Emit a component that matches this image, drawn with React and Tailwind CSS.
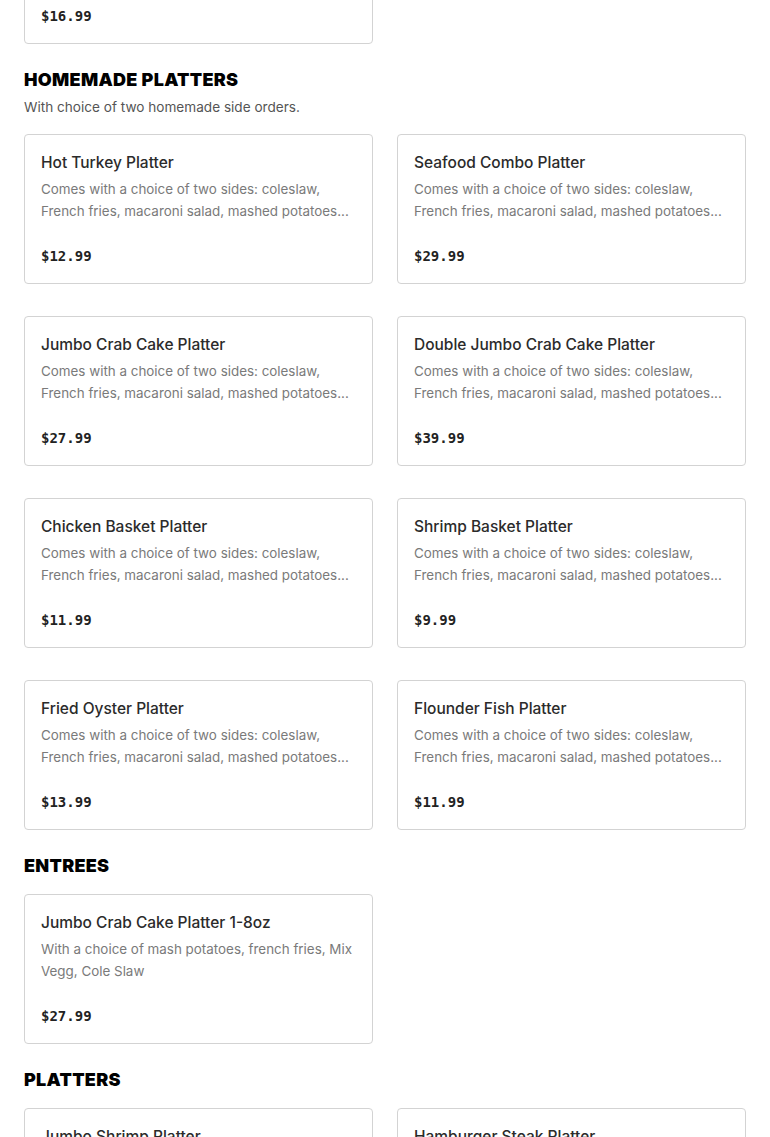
import React from 'react';

const SIDES = 'Comes with a choice of two sides: coleslaw, French fries, macaroni salad, mashed potatoes...';

const sections = [
  {
    title: 'HOMEMADE PLATTERS',
    subtitle: 'With choice of two homemade side orders.',
    items: [
      { name: 'Hot Turkey Platter', desc: SIDES, price: '$12.99' },
      { name: 'Seafood Combo Platter', desc: SIDES, price: '$29.99' },
      { name: 'Jumbo Crab Cake Platter', desc: SIDES, price: '$27.99' },
      { name: 'Double Jumbo Crab Cake Platter', desc: SIDES, price: '$39.99' },
      { name: 'Chicken Basket Platter', desc: SIDES, price: '$11.99' },
      { name: 'Shrimp Basket Platter', desc: SIDES, price: '$9.99' },
      { name: 'Fried Oyster Platter', desc: SIDES, price: '$13.99' },
      { name: 'Flounder Fish Platter', desc: SIDES, price: '$11.99' },
    ],
  },
  {
    title: 'ENTREES',
    items: [
      {
        name: 'Jumbo Crab Cake Platter 1-8oz',
        desc: 'With a choice of mash potatoes, french fries, Mix Vegg, Cole Slaw',
        price: '$27.99',
      },
    ],
  },
  {
    title: 'PLATTERS',
    items: [
      { name: 'Jumbo Shrimp Platter', desc: SIDES, price: '$18.99' },
      { name: 'Hamburger Steak Platter', desc: SIDES, price: '$12.99' },
    ],
  },
];

function ItemCard({ item }) {
  return (
    <div className="h-[150px] rounded-[4px] border border-[#d3d3d3] bg-white px-4 pt-[17px] pb-4 flex flex-col">
      <div className="text-[15.5px] leading-[22px] font-medium text-[#2b2b2b]">{item.name}</div>
      <p className="mt-[4px] text-[13.4px] leading-[22px] text-[#7a7a7a] line-clamp-2">{item.desc}</p>
      <div className="mt-auto font-['DejaVu_Sans_Mono',monospace] font-bold text-[14px] leading-[22px] text-[#222]">
        {item.price}
      </div>
    </div>
  );
}

function Section({ section }) {
  return (
    <section className="mt-[22px]">
      <h2 className="font-['Inter',sans-serif] font-black text-[18px] leading-[28px] text-black tracking-[0.3px]">
        {section.title}
      </h2>
      {section.subtitle && (
        <p className="mt-[3px] text-[13.6px] leading-[20px] text-[#555]">{section.subtitle}</p>
      )}
      <div className={`grid grid-cols-2 gap-x-6 gap-y-8 ${section.subtitle ? 'mt-[17px]' : 'mt-[14px]'}`}>
        {section.items.map((item) => (
          <ItemCard key={item.name} item={item} />
        ))}
      </div>
    </section>
  );
}

export default function App() {
  return (
    <div className="h-[1137px] overflow-hidden bg-white font-['Inter',sans-serif]">
      <div className="px-6 -mt-[106px]">
        <div className="grid grid-cols-2 gap-x-6">
          <ItemCard item={{ name: 'Fried Chicken Wings', desc: SIDES, price: '$16.99' }} />
        </div>
        {sections.map((s) => (
          <Section key={s.title} section={s} />
        ))}
      </div>
    </div>
  );
}
